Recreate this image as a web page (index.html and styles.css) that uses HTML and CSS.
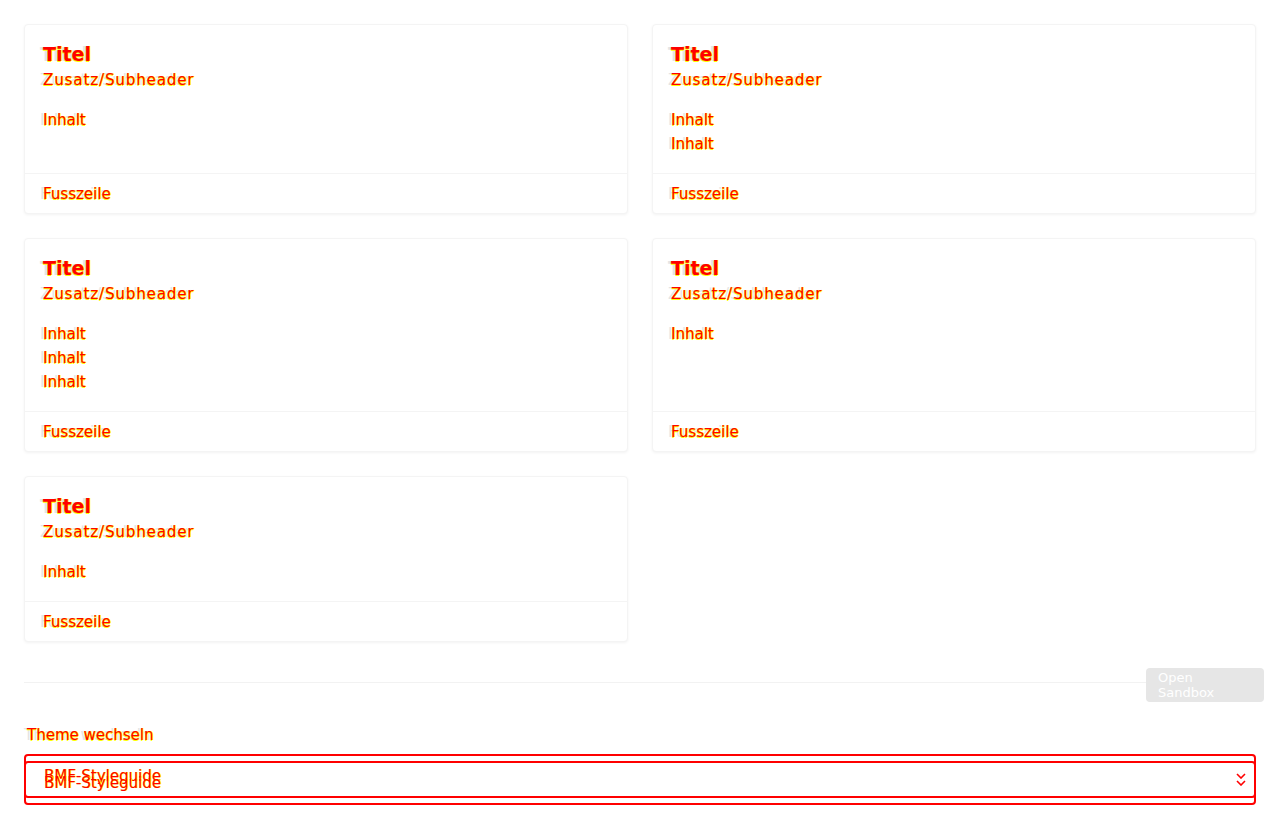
FILE: index.html
```html
<!DOCTYPE html>
<html lang="de">
<head>
<meta charset="utf-8">
<title>Cards</title>
<link rel="stylesheet" href="styles.css">
</head>
<body>
<main class="page">
  <section class="grid">
    <article class="card">
      <div class="card-body">
        <h2 class="title"><span class="dt"><span class="g">Titel</span><span class="r">Titel</span></span></h2>
        <p class="sub"><span class="dt"><span class="g">Zusatz/Subheader</span><span class="r">Zusatz/Subheader</span></span></p>
        <div class="content">
          <p class="line"><span class="dt"><span class="g">Inhalt</span><span class="r">Inhalt</span></span></p>
        </div>
      </div>
      <footer class="card-foot"><span class="dt"><span class="g">Fusszeile</span><span class="r">Fusszeile</span></span></footer>
    </article>
    <article class="card">
      <div class="card-body">
        <h2 class="title"><span class="dt"><span class="g">Titel</span><span class="r">Titel</span></span></h2>
        <p class="sub"><span class="dt"><span class="g">Zusatz/Subheader</span><span class="r">Zusatz/Subheader</span></span></p>
        <div class="content">
          <p class="line"><span class="dt"><span class="g">Inhalt</span><span class="r">Inhalt</span></span></p>
          <p class="line"><span class="dt"><span class="g">Inhalt</span><span class="r">Inhalt</span></span></p>
        </div>
      </div>
      <footer class="card-foot"><span class="dt"><span class="g">Fusszeile</span><span class="r">Fusszeile</span></span></footer>
    </article>
    <article class="card">
      <div class="card-body">
        <h2 class="title"><span class="dt"><span class="g">Titel</span><span class="r">Titel</span></span></h2>
        <p class="sub"><span class="dt"><span class="g">Zusatz/Subheader</span><span class="r">Zusatz/Subheader</span></span></p>
        <div class="content">
          <p class="line"><span class="dt"><span class="g">Inhalt</span><span class="r">Inhalt</span></span></p>
          <p class="line"><span class="dt"><span class="g">Inhalt</span><span class="r">Inhalt</span></span></p>
          <p class="line"><span class="dt"><span class="g">Inhalt</span><span class="r">Inhalt</span></span></p>
        </div>
      </div>
      <footer class="card-foot"><span class="dt"><span class="g">Fusszeile</span><span class="r">Fusszeile</span></span></footer>
    </article>
    <article class="card">
      <div class="card-body">
        <h2 class="title"><span class="dt"><span class="g">Titel</span><span class="r">Titel</span></span></h2>
        <p class="sub"><span class="dt"><span class="g">Zusatz/Subheader</span><span class="r">Zusatz/Subheader</span></span></p>
        <div class="content">
          <p class="line"><span class="dt"><span class="g">Inhalt</span><span class="r">Inhalt</span></span></p>
        </div>
      </div>
      <footer class="card-foot"><span class="dt"><span class="g">Fusszeile</span><span class="r">Fusszeile</span></span></footer>
    </article>
    <article class="card">
      <div class="card-body">
        <h2 class="title"><span class="dt"><span class="g">Titel</span><span class="r">Titel</span></span></h2>
        <p class="sub"><span class="dt"><span class="g">Zusatz/Subheader</span><span class="r">Zusatz/Subheader</span></span></p>
        <div class="content">
          <p class="line"><span class="dt"><span class="g">Inhalt</span><span class="r">Inhalt</span></span></p>
        </div>
      </div>
      <footer class="card-foot"><span class="dt"><span class="g">Fusszeile</span><span class="r">Fusszeile</span></span></footer>
    </article>
  </section>

  <div class="toolbar">
    <hr class="rule">
    <button class="sandbox" type="button">Open<br>Sandbox</button>
  </div>

  <section class="theme">
    <label class="theme-label"><span class="dt"><span class="g">Theme wechseln</span><span class="r">Theme wechseln</span></span></label>
    <div class="select-wrap">
      <div class="select">
        <span class="sel-text">BMF-Styleguide</span>
        <svg class="chev" width="10" height="6" viewBox="0 0 10 6"><path d="M1 1l4 4 4-4" fill="none" stroke="#ff0000" stroke-width="1.6"/></svg>
      </div>
      <div class="select select-ghost">
        <span class="sel-text">BMF-Styleguide</span>
        <svg class="chev" width="10" height="6" viewBox="0 0 10 6"><path d="M1 1l4 4 4-4" fill="none" stroke="#ff0000" stroke-width="1.6"/></svg>
      </div>
    </div>
  </section>
</main>
</body>
</html>
```
FILE: styles.css
```css
html, body {
  margin: 0;
  padding: 0;
  background: #ffffff;
}
body {
  font-family: "DejaVu Sans", "Liberation Sans", sans-serif;
  color: #e4e4e4;
}
.page {
  padding: 24px 24px 0 24px;
}
.grid {
  display: grid;
  grid-template-columns: 1fr 1fr;
  gap: 24px;
}
.card {
  display: flex;
  flex-direction: column;
  border: 1px solid #f4f4f4;
  border-radius: 4px;
  box-shadow: 0 1px 3px rgba(0, 0, 0, 0.05);
  background: #fff;
}
.card-body {
  flex: 1;
  padding: 16px 15px 17px 15px;
}
.title {
  margin: 0;
  font-size: 19px;
  font-weight: bold;
  line-height: 26px;
}
.sub {
  margin: 0;
  font-size: 15px;
  line-height: 26px;
  letter-spacing: 0.9px;
}
.content {
  margin-top: 15px;
}
.line {
  margin: 0;
  font-size: 15px;
  line-height: 24px;
}
.card-foot {
  border-top: 1px solid #f4f4f4;
  padding: 8px 15px 7px 15px;
  font-size: 15px;
  line-height: 24px;
}
.dt {
  position: relative;
  display: inline-block;
}
.dt .g {
  color: #e4e4e4;
}
.dt .r {
  position: absolute;
  left: 3px;
  top: 0;
  color: #ff0000;
  white-space: nowrap;
  text-shadow: 1px 0 0 #ffff00, 0 1px 0 #ffff00;
}
.toolbar {
  display: flex;
  align-items: flex-start;
  margin-top: 26px;
}
.rule {
  flex: 1;
  border: 0;
  border-top: 1px solid #f2f2f2;
  margin: 14px 0 0 0;
}
.sandbox {
  width: 118px;
  height: 34px;
  margin-right: -8px;
  background: #e6e6e6;
  border: 0;
  border-radius: 4px;
  color: #ffffff;
  font-family: "DejaVu Sans", sans-serif;
  font-size: 13px;
  line-height: 15px;
  text-align: left;
  padding: 1px 12px;
}
.theme {
  margin-top: 24px;
}
.theme-label {
  display: block;
  font-size: 15px;
  line-height: 18px;
}
.select-wrap {
  position: relative;
  margin-top: 10px;
  height: 51px;
}
.select {
  display: flex;
  align-items: center;
  justify-content: space-between;
  height: 40px;
  border: 2px solid #ff0000;
  border-radius: 4px;
  padding: 0 8px 0 18px;
  color: #ff0000;
  font-size: 15px;
  text-shadow: 1px 0 0 #ffff00;
}
.select-ghost {
  position: absolute;
  left: 0;
  right: 0;
  top: 7px;
  background: transparent;
}
```
